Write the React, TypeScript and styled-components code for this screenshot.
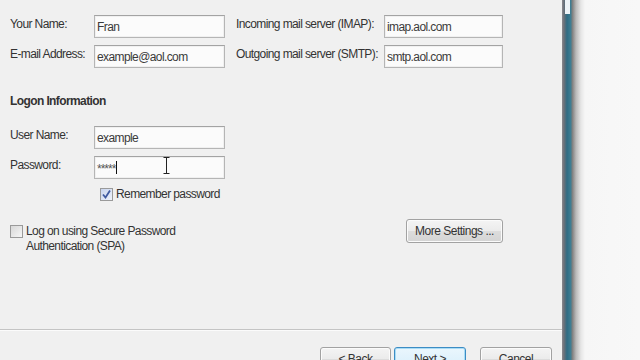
import React from "react";
import styled, { createGlobalStyle } from "styled-components";

const GlobalStyle = createGlobalStyle`
  html, body {
    margin: 0;
    padding: 0;
    background: #f8f8f8;
  }
  body {
    font-family: "Liberation Sans", Arial, sans-serif;
    font-size: 12px;
    color: #333;
  }
`;

const App = () => {
  return (
    <>
      <GlobalStyle />
      <Screen>
        <Dialog>
          <Body>
            <ServerGrid>
              <Label>Your Name:</Label>
              <Field>Fran</Field>
              <SideLabel>Incoming mail server (IMAP):</SideLabel>
              <Field>imap.aol.com</Field>
              <Label>E-mail Address:</Label>
              <Field>example@aol.com</Field>
              <SideLabel>Outgoing mail server (SMTP):</SideLabel>
              <Field>smtp.aol.com</Field>
            </ServerGrid>

            <SectionTitle>Logon Information</SectionTitle>

            <LogonGrid>
              <Label>User Name:</Label>
              <Field>example</Field>
              <Label>Password:</Label>
              <Field>
                <Stars>*****</Stars>
                <Caret />
              </Field>
            </LogonGrid>

            <CheckRow $indent={90}>
              <CheckBox $checked>
                <svg width="11" height="11" viewBox="0 0 11 11">
                  <path d="M2 5.5 L4.5 8.5 L9 1.5" fill="none" stroke="#3f5aa0" strokeWidth="1.8" />
                </svg>
              </CheckBox>
              <span>Remember password</span>
            </CheckRow>

            <OptionsRow>
              <CheckRow $indent={0} $offset={5}>
                <CheckBox />
                <span>
                  Log on using Secure Password
                  <br />
                  Authentication (SPA)
                </span>
              </CheckRow>
              <PushButton $width={97}>More Settings ...</PushButton>
            </OptionsRow>

            <IBeam width="7" height="17" viewBox="0 0 7 17">
              <path d="M0.5 0.5 H6.5 M3.5 0.5 V16.5 M0.5 16.5 H6.5" stroke="#222" strokeWidth="1" fill="none" />
            </IBeam>
          </Body>
          <Separator />
          <ButtonBar>
            <PushButton $width={71}>&lt; Back</PushButton>
            <PushButton $width={72} $primary $gap={3}>
              Next &gt;
            </PushButton>
            <PushButton $width={72} $gap={14}>
              Cancel
            </PushButton>
          </ButtonBar>
        </Dialog>
        <WindowEdge />
      </Screen>
    </>
  );
};

export default App;

const Screen = styled.div`
  display: flex;
  width: 640px;
  height: 360px;
  overflow: hidden;
`;

const Dialog = styled.div`
  width: 562px;
  height: 360px;
  background: #f0f0f0;
  display: flex;
  flex-direction: column;
`;

const Body = styled.div`
  position: relative;
  flex: none;
  height: 329px;
  box-sizing: border-box;
  padding: 15px 0 0 10px;
  letter-spacing: -0.6px;
`;

const ServerGrid = styled.div`
  display: grid;
  grid-template-columns: 84px 131px 159px 119px;
  grid-auto-rows: 23px;
  row-gap: 7px;
  align-items: center;
`;

const LogonGrid = styled(ServerGrid)`
  grid-template-columns: 84px 131px;
  margin-top: 17px;
`;

const Label = styled.div`
  margin-top: -5px;
  white-space: nowrap;
`;

const SideLabel = styled(Label)`
  padding-left: 11px;
`;

const Field = styled.div`
  display: flex;
  align-items: center;
  height: 23px;
  box-sizing: border-box;
  padding: 0 2px;
  background: #fbfbfb;
  border: 1px solid #b5b5b5;
  border-top-color: #a3a3a3;
  box-shadow: inset 0 0 0 1px #f0f0f0;
  color: #3a3a3a;
  white-space: nowrap;
  overflow: hidden;
`;

const Stars = styled.span`
  font-size: 12px;
  letter-spacing: -1px;
  color: #555;
  margin-top: 2px;
`;

const Caret = styled.span`
  display: inline-block;
  width: 1px;
  height: 13px;
  margin-left: 1px;
  background: #111;
`;

const SectionTitle = styled.div`
  margin-top: 26px;
  height: 15px;
  line-height: 15px;
  font-weight: 700;
  color: #333;
`;

const CheckRow = styled.div<{ $indent: number; $offset?: number }>`
  display: flex;
  align-items: flex-start;
  gap: 3px;
  margin-left: ${(p) => p.$indent}px;
  margin-top: ${(p) => p.$offset ?? 8}px;
  line-height: 15px;
`;

const CheckBox = styled.span<{ $checked?: boolean }>`
  display: flex;
  align-items: center;
  justify-content: center;
  flex: none;
  width: 13px;
  height: 13px;
  box-sizing: border-box;
  margin-top: 1px;
  border: 1px solid #9a9a9a;
  background: ${(p) =>
    p.$checked
      ? "linear-gradient(135deg, #c8d4ee, #eef2fa)"
      : "linear-gradient(135deg, #d8d8d8, #f6f6f6)"};
`;

const OptionsRow = styled.div`
  display: flex;
  justify-content: space-between;
  align-items: flex-start;
  width: 493px;
  margin-top: 17px;
`;

const PushButton = styled.div<{ $width: number; $primary?: boolean; $gap?: number }>`
  display: flex;
  align-items: center;
  justify-content: center;
  flex: none;
  width: ${(p) => p.$width}px;
  height: 24px;
  box-sizing: border-box;
  margin-left: ${(p) => p.$gap ?? 0}px;
  border: 1px solid ${(p) => (p.$primary ? "#3c8cc4" : "#a2a2a2")};
  border-radius: 3px;
  background: ${(p) =>
    p.$primary
      ? "linear-gradient(#eaf6fd, #d6eefb)"
      : "linear-gradient(#f4f4f4 0%, #ebebeb 50%, #dcdcdc 51%, #d4d4d4 100%)"};
  box-shadow: inset 0 0 0 1px ${(p) => (p.$primary ? "#a8dcf6" : "#fbfbfb")};
  color: #333;
  letter-spacing: -0.5px;
  white-space: nowrap;
`;

const Separator = styled.div`
  flex: none;
  height: 1px;
  background: #c4c4c4;
  border-bottom: 1px solid #fbfbfb;
`;

const ButtonBar = styled.div`
  display: flex;
  justify-content: flex-end;
  flex: none;
  height: 29px;
  box-sizing: border-box;
  padding: 16px 10px 0 0;
  overflow: hidden;
`;

const IBeam = styled.svg`
  position: absolute;
  left: 163px;
  top: 157px;
`;

const WindowEdge = styled.div`
  position: relative;
  flex: 1;
  background: linear-gradient(
    to right,
    #8a8a90 0px,
    #6c7078 2px,
    #2f6c84 5px,
    #3f7f94 9px,
    #7a7a7a 10px,
    #b9b9b9 14px,
    #e6e6e6 19px,
    #f6f6f6 23px,
    #f8f8f8 100%
  );

  &::before {
    content: "";
    position: absolute;
    left: 3px;
    top: 0;
    width: 5px;
    height: 14px;
    background: #eef3f7;
  }
`;
